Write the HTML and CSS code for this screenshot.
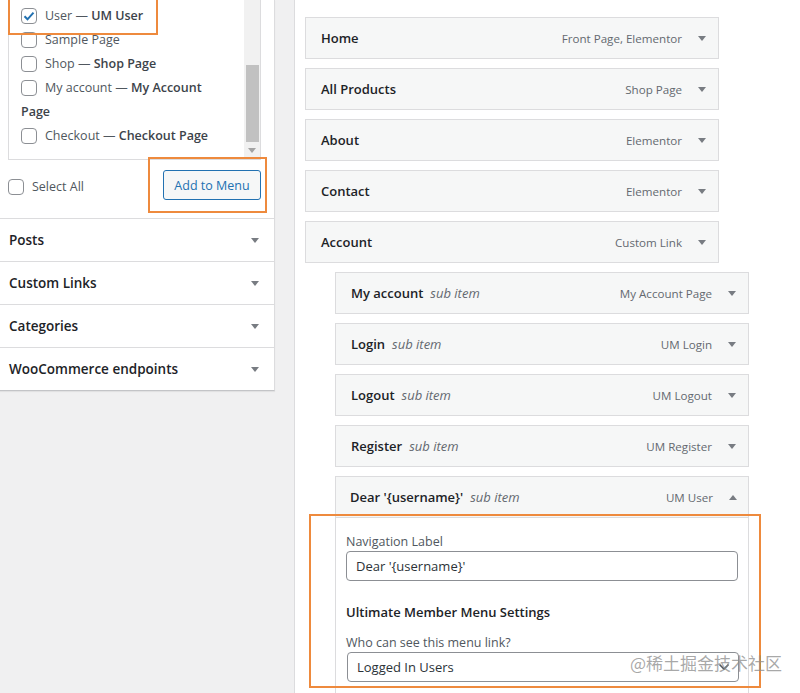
FILE: index.html
```html
<!DOCTYPE html>
<html lang="en">
<head>
<meta charset="utf-8">
<title>Menus</title>
<link rel="stylesheet" href="styles.css">
</head>
<body>
<div class="page">
  <aside class="left">
    <div class="panel">
      <div class="listbox">
        <ul class="checklist">
          <li><label><span class="cb checked"><svg viewBox="0 0 16 16" width="16" height="16"><path d="M3.5 8.3l3 3 6-6.6" fill="none" stroke="#2271b1" stroke-width="2"/></svg></span>User — <b>UM User</b></label></li>
          <li><label><span class="cb"></span>Sample Page</label></li>
          <li><label><span class="cb"></span>Shop — <b>Shop Page</b></label></li>
          <li><label><span class="cb"></span>My account — <b>My Account Page</b></label></li>
          <li><label><span class="cb"></span>Checkout — <b>Checkout Page</b></label></li>
        </ul>
        <div class="scroll"><div class="thumb"></div><span class="tri tri-s"></span></div>
        <div class="hl hl-user"></div>
      </div>
      <div class="actions">
        <label class="selall"><span class="cb"></span>Select All</label>
        <div class="btnwrap">
          <button class="btn">Add to Menu</button>
          <div class="hl hl-btn"></div>
        </div>
      </div>
      <div class="sect"><span>Posts</span><span class="tri"></span></div>
      <div class="sect"><span>Custom Links</span><span class="tri"></span></div>
      <div class="sect"><span>Categories</span><span class="tri"></span></div>
      <div class="sect"><span>WooCommerce endpoints</span><span class="tri"></span></div>
    </div>
  </aside>
  <main class="right">
    <div class="item"><span class="title">Home</span><span class="type">Front Page, Elementor</span><span class="tri"></span></div>
    <div class="item"><span class="title">All Products</span><span class="type">Shop Page</span><span class="tri"></span></div>
    <div class="item"><span class="title">About</span><span class="type">Elementor</span><span class="tri"></span></div>
    <div class="item"><span class="title">Contact</span><span class="type">Elementor</span><span class="tri"></span></div>
    <div class="item"><span class="title">Account</span><span class="type">Custom Link</span><span class="tri"></span></div>
    <div class="item sub"><span class="title">My account</span><em class="subtag">sub item</em><span class="type">My Account Page</span><span class="tri"></span></div>
    <div class="item sub"><span class="title">Login</span><em class="subtag">sub item</em><span class="type">UM Login</span><span class="tri"></span></div>
    <div class="item sub"><span class="title">Logout</span><em class="subtag">sub item</em><span class="type">UM Logout</span><span class="tri"></span></div>
    <div class="item sub"><span class="title">Register</span><em class="subtag">sub item</em><span class="type">UM Register</span><span class="tri"></span></div>
    <div class="open sub">
      <div class="item head"><span class="title">Dear '{username}'</span><em class="subtag">sub item</em><span class="type">UM User</span><span class="tri up"></span></div>
      <div class="settings">
        <label class="flabel">Navigation Label</label>
        <div class="input">Dear '{username}'</div>
        <h4 class="um">Ultimate Member Menu Settings</h4>
        <label class="flabel who">Who can see this menu link?</label>
        <div class="input select">Logged In Users<svg class="chev" width="12" height="8" viewBox="0 0 12 8"><path d="M1.5 1.5l4.5 4.5 4.5-4.5" fill="none" stroke="#50575e" stroke-width="1.6"/></svg></div>
      </div>
      <div class="hl hl-set"></div>
    </div>
  </main>
</div>
<div class="watermark">@稀土掘金技术社区</div>
</body>
</html>
```

FILE: styles.css
```css
* { box-sizing: border-box; }
html, body { margin: 0; padding: 0; }
body {
  background: #f0f0f1;
  font-family: "Open Sans", "Noto Sans", sans-serif;
  color: #1d2327;
  font-size: 13px;
  width: 800px;
  height: 693px;
  overflow: hidden;
  position: relative;
}
.page { display: flex; height: 693px; overflow: hidden; }
.left { width: 275px; flex: none; }
.panel {
  background: #fff;
  border-right: 1px solid #dcdcde;
  border-bottom: 1px solid #c3c4c7;
  box-shadow: 0 1px 1px rgba(0,0,0,.06);
}
.listbox {
  position: relative;
  margin: 0 13px 0 8px;
  height: 160px;
  border: 1px solid #dcdcde;
  border-top: none;
  display: flex;
}
.checklist {
  list-style: none;
  margin: 0;
  padding: 4px 14px 0 12px;
  flex: 1;
  color: #50575e;
  font-size: 12.5px;
  line-height: 24px;
}
.checklist b { font-weight: 600; color: #3c434a; }
.cb {
  display: inline-block;
  width: 16px;
  height: 16px;
  border: 1px solid #8c8f94;
  border-radius: 4px;
  background: #fff;
  vertical-align: -4px;
  margin-right: 8px;
  position: relative;
}
.cb svg { position: absolute; left: -1px; top: -1px; }
.scroll {
  width: 16px;
  flex: none;
  background: #f1f1f1;
  padding-top: 65px;
  display: flex;
  flex-direction: column;
  align-items: center;
}
.thumb { width: 13px; height: 77px; background: #c1c1c1; margin-left: 1px; }
.tri {
  display: inline-block;
  width: 0; height: 0;
  border-left: 4px solid transparent;
  border-right: 4px solid transparent;
  border-top: 5px solid #787c82;
  flex: none;
}
.tri.up { border-top: none; border-bottom: 5px solid #787c82; }
.tri-s { margin-top: 6px; border-top-color: #a3a3a3; }
.hl { position: absolute; border: 2px solid #ee8a3d; pointer-events: none; }
.hl-user { left: -1px; top: -10px; width: 150px; height: 45px; }
.actions {
  display: flex;
  justify-content: space-between;
  align-items: center;
  padding: 10px 13px 18px 8px;
}
.selall { color: #50575e; font-size: 12.5px; margin-top: 3px; }
.btnwrap { position: relative; }
.btn {
  display: block;
  font-family: inherit;
  font-size: 12.5px;
  color: #2271b1;
  background: #f6f7f7;
  border: 1px solid #2271b1;
  border-radius: 3px;
  width: 98px;
  height: 30px;
  padding: 0;
}
.hl-btn { left: -15px; top: -13px; width: 119px; height: 56px; }
.sect {
  height: 43px;
  border-top: 1px solid #dcdcde;
  display: flex;
  align-items: center;
  justify-content: space-between;
  padding: 0 15px 0 9px;
  font-size: 13.5px;
  font-weight: 600;
  color: #1d2327;
}
.right {
  flex: 1;
  margin-left: 19px;
  background: #fff;
  border-left: 1px solid #dcdcde;
  padding: 17px 0 0 10px;
  overflow: hidden;
}
.item {
  width: 414px;
  height: 42px;
  margin-bottom: 9px;
  background: #f6f7f7;
  border: 1px solid #dcdcde;
  display: flex;
  align-items: center;
  padding: 0 12px 0 15px;
}
.item.sub { margin-left: 30px; }
.title { font-weight: 600; font-size: 13px; color: #1d2327; }
.subtag { font-style: italic; color: #646970; margin-left: 7px; font-size: 13px; }
.type { margin-left: auto; color: #646970; font-size: 11.6px; margin-right: 16px; }
.open {
  position: relative;
  margin-left: 30px;
  width: 414px;
  border: 1px solid #dcdcde;
  border-bottom: none;
  height: 217px;
}
.open .item.head { border: none; width: 412px; height: 40px; margin: 0; padding-left: 14px; padding-right: 11px; }
.settings {
  background: #fff;
  border-top: 1px solid #dcdcde;
  padding: 15px 10px 0 10px;
}
.flabel { display: block; color: #50575e; font-size: 12.5px; line-height: 18px; }
.input {
  height: 30px;
  border: 1px solid #8c8f94;
  border-radius: 4px;
  padding: 0 9px;
  display: flex;
  align-items: center;
  font-size: 13px;
  color: #2c3338;
  width: 392px;
}
.um { margin: 21px 0 0; font-size: 13px; font-weight: 600; line-height: 20px; color: #1d2327; }
.who { margin-top: 12px; }
.select { width: 392px; margin-left: 1px; justify-content: space-between; padding-right: 8px; }
.chev { flex: none; }
.hl-set { left: -27px; top: 37px; width: 452px; height: 174px; }
.watermark {
  position: absolute;
  left: 630px;
  top: 652px;
  font-family: "Noto Sans CJK SC", sans-serif;
  font-size: 17px;
  line-height: 22px;
  color: rgba(140,140,140,0.75);
}
```
